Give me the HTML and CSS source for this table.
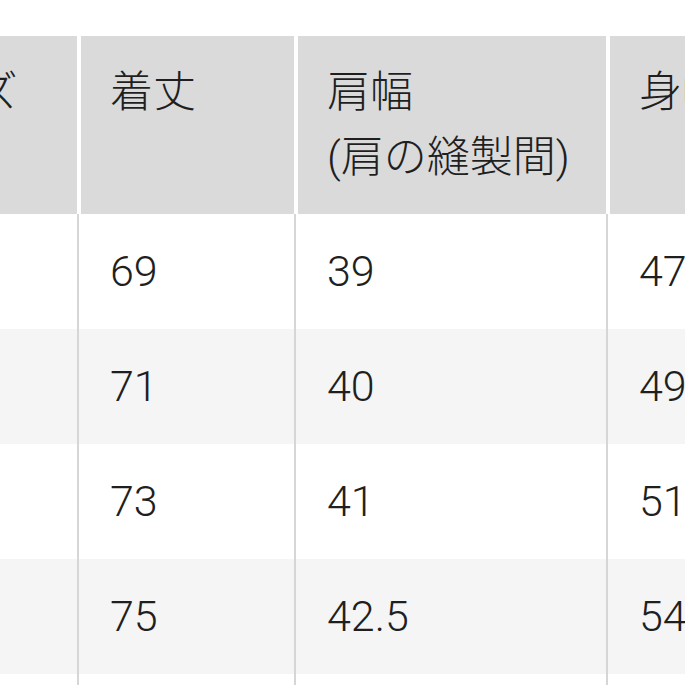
FILE: index.html
```html
<!DOCTYPE html>
<html lang="ja">
<head>
<meta charset="utf-8">
<link rel="stylesheet" href="styles.css">
</head>
<body>
<div class="viewport">
  <table class="size-table">
    <colgroup>
      <col class="c-size">
      <col class="c-len">
      <col class="c-shoulder">
      <col class="c-body">
      <col class="c-sleeve">
    </colgroup>
    <thead>
      <tr>
        <th>サイズ</th>
        <th>着丈</th>
        <th>肩幅<br>(肩の縫製間)</th>
        <th>身幅</th>
        <th>袖丈</th>
      </tr>
    </thead>
    <tbody>
      <tr><td>S</td><td>69</td><td>39</td><td>47</td><td>20</td></tr>
      <tr><td>M</td><td>71</td><td>40</td><td>49</td><td>21</td></tr>
      <tr><td>L</td><td>73</td><td>41</td><td>51</td><td>22</td></tr>
      <tr><td>XL</td><td>75</td><td>42.5</td><td>54</td><td>23</td></tr>
      <tr><td>XXL</td><td>77</td><td>44</td><td>57</td><td>24</td></tr>
    </tbody>
  </table>
</div>
</body>
</html>
```

FILE: styles.css
```css
html, body {
  margin: 0;
  padding: 0;
  background: #ffffff;
}

.viewport {
  width: 685px;
  height: 685px;
  overflow: hidden;
  padding-top: 36px;
  box-sizing: border-box;
}

.size-table {
  margin-left: -139px;
  table-layout: fixed;
  width: 1360px;
  border-collapse: separate;
  border-spacing: 0;
  font-family: Roboto, "Noto Sans CJK JP", sans-serif;
  font-weight: 300;
  font-size: 43px;
  line-height: 65px;
  color: #1f1f1f;
}

.c-size { width: 216px; }
.c-len { width: 217px; }
.c-shoulder { width: 312px; }
.c-body { width: 312px; }
.c-sleeve { width: 303px; }

.size-table th,
.size-table td {
  text-align: left;
  font-weight: 300;
  padding: 24px 28px 24px 29px;
  white-space: nowrap;
  overflow: hidden;
}

.size-table th {
  background: #dadada;
  vertical-align: top;
}

.size-table th + th {
  border-left: 4px solid #ffffff;
}

.size-table td {
  vertical-align: middle;
  padding-top: 25px;
  padding-bottom: 25px;
}

.size-table td + td {
  border-left: 2px solid #d6d6d6;
  padding-left: 31px;
}

.size-table tbody tr:nth-child(even) td {
  background: #f5f5f5;
}
```
